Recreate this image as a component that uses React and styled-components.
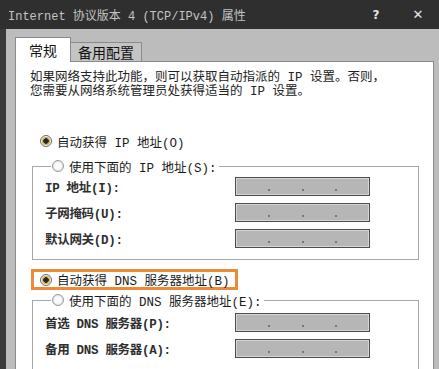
import React from "react";
import styled, { createGlobalStyle } from "styled-components";

const GlobalStyle = createGlobalStyle`
  body {
    margin: 0;
    background: #bcbcbc;
  }
`;

const font = `"Liberation Mono", "Noto Sans CJK SC", monospace`;

const Window = styled.div`
  width: 439px;
  height: 369px;
  overflow: hidden;
  display: flex;
  flex-direction: column;
  background: #bcbcbc;
  font-family: ${font};
  font-size: 12.5px;
  color: #1a1a1a;
`;

const TitleBar = styled.div`
  height: 29px;
  flex-shrink: 0;
  display: flex;
  align-items: center;
  padding: 0 0 0 8px;
  background: #2f2f2f;
  color: #c4c4c4;
  font-size: 12px;
`;

const Title = styled.span`
  flex: 1;
`;

const TitleButton = styled.span`
  width: 42px;
  text-align: center;
  color: #e6e6e6;
  font-family: "DejaVu Sans", sans-serif;
  font-weight: bold;
  font-size: ${props => props.size || 12}px;
`;

const Body = styled.div`
  flex: 1;
  display: flex;
  flex-direction: column;
  border-left: 6px solid #3a3a3a;
  padding: 8px 5px 0 9px;
`;

const TabRow = styled.div`
  display: flex;
  align-items: flex-end;
  margin-bottom: -1px;
  position: relative;
  z-index: 1;
`;

const Tab = styled.div`
  box-sizing: border-box;
  height: ${props => (props.active ? 25 : 20)}px;
  padding: 0 ${props => (props.active ? 13 : 7)}px;
  display: flex;
  align-items: center;
  background: ${props => (props.active ? "#fff" : "#c4c4c4")};
  border: 1px solid #8a8a8a;
  border-bottom: ${props => (props.active ? "none" : "1px solid #8a8a8a")};
  border-left: ${props => (props.active ? "1px solid #8a8a8a" : "none")};
  font-family: "Noto Sans CJK SC", sans-serif;
  font-size: 14px;
  color: #111;
`;

const Panel = styled.div`
  flex: 1;
  background: #fff;
  border: 1px solid #8a8a8a;
  border-bottom: none;
  padding: 9px 14px 0 14px;
  display: flex;
  flex-direction: column;
  align-items: flex-start;
`;

const Intro = styled.p`
  margin: 0;
  line-height: 14px;
  color: #222;
`;

const RadioRow = styled.div`
  display: flex;
  align-items: center;
  gap: 5px;
  height: 16px;
  margin-left: ${props => props.indent || 0}px;
  margin-top: ${props => props.top || 0}px;
  color: #1a1a1a;
`;

const Radio = styled.span`
  box-sizing: border-box;
  width: 12px;
  height: 12px;
  border-radius: 50%;
  border: 1px solid ${props => (props.checked ? "#6a6a6a" : "#9a9a9a")};
  background: ${props =>
    props.checked
      ? "radial-gradient(circle, #2a2a2a 0 2.5px, #d9b65a 3px 4px, #f4f4f4 4.5px)"
      : "radial-gradient(circle, #fafafa 0 3px, #e4e4e4 5px)"};
`;

const Highlight = styled.div`
  box-sizing: border-box;
  width: 207px;
  height: 21px;
  margin: 9px 0 0 1px;
  border: 3px solid #ec8a36;
  display: flex;
  align-items: center;
  padding-left: 6px;
`;

const Group = styled.fieldset`
  box-sizing: border-box;
  width: 387px;
  margin: ${props => props.top || 0}px 0 0 2px;
  padding: ${props => props.pad || 3}px 0 11px 12px;
  border: 1px solid #a8a8a8;
  display: flex;
  flex-direction: column;
  gap: 7px;
`;

const Legend = styled.legend`
  margin-left: 6px;
  padding: 0 2px 0 1px;
`;

const FieldRow = styled.div`
  display: grid;
  grid-template-columns: 190px 135px;
  align-items: center;
  height: 19px;
`;

const Label = styled.span`
  font-weight: bold;
  color: #2e2e2e;
  letter-spacing: -0.3px;
`;

const IpBox = styled.div`
  box-sizing: border-box;
  height: 19px;
  border: 1px solid #4c4c4c;
  box-shadow: inset 0 0 0 1px #d6d6d6;
  background: #b6b6b6;
  display: flex;
  justify-content: space-evenly;
  align-items: flex-end;
  padding-bottom: 4px;
`;

const Dot = styled.span`
  width: 2px;
  height: 2px;
  background: #777;
`;

const IpField = ({ label }) => (
  <FieldRow>
    <Label>{label}</Label>
    <IpBox>
      <Dot />
      <Dot />
      <Dot />
    </IpBox>
  </FieldRow>
);

const App = () => (
  <>
    <GlobalStyle />
    <Window>
      <TitleBar>
        <Title>Internet 协议版本 4 (TCP/IPv4) 属性</Title>
        <TitleButton>?</TitleButton>
        <TitleButton size={13}>✕</TitleButton>
      </TitleBar>
      <Body>
        <TabRow>
          <Tab active>常规</Tab>
          <Tab>备用配置</Tab>
        </TabRow>
        <Panel>
          <Intro>
            如果网络支持此功能，则可以获取自动指派的 IP 设置。否则，
            <br />
            您需要从网络系统管理员处获得适当的 IP 设置。
          </Intro>
          <RadioRow indent={10} top={34}>
            <Radio checked />
            自动获得 IP 地址(O)
          </RadioRow>
          <Group top={9}>
            <Legend>
              <RadioRow>
                <Radio />
                使用下面的 IP 地址(S):
              </RadioRow>
            </Legend>
            <IpField label="IP 地址(I):" />
            <IpField label="子网掩码(U):" />
            <IpField label="默认网关(D):" />
          </Group>
          <Highlight>
            <RadioRow>
              <Radio checked />
              自动获得 DNS 服务器地址(B)
            </RadioRow>
          </Highlight>
          <Group top={2} pad={5}>
            <Legend>
              <RadioRow>
                <Radio />
                使用下面的 DNS 服务器地址(E):
              </RadioRow>
            </Legend>
            <IpField label="首选 DNS 服务器(P):" />
            <IpField label="备用 DNS 服务器(A):" />
          </Group>
        </Panel>
      </Body>
    </Window>
  </>
);

export default App;
